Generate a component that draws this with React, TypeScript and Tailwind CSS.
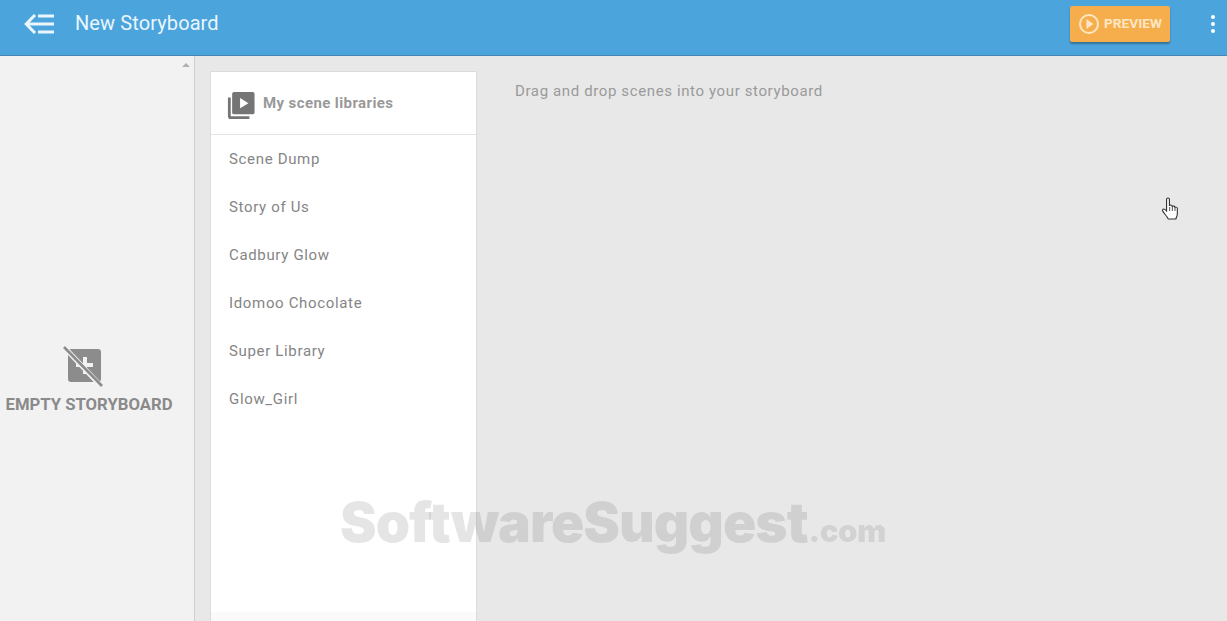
export default function App() {
  const libs = ["Scene Dump", "Story of Us", "Cadbury Glow", "Idomoo Chocolate", "Super Library", "Glow_Girl"];
  return (
    <div className="relative flex h-[621px] w-[1227px] flex-col overflow-hidden bg-[#e8e8e8] font-['Roboto',sans-serif]">
      <header className="flex h-[56px] shrink-0 items-center border-b border-[#4586b5] bg-[#4ca4dc] pb-[8px] pl-[24px] pr-[12px] text-white">
        <svg width="31" height="20" viewBox="0 0 31 20" fill="none" stroke="#eaf6fd" strokeWidth="3">
          <path d="M11 1 2.200 10l8.800 9" />
          <path d="M3 10h27M14 2h16M14 18h16" />
        </svg>
        <h1 className="mb-[1px] ml-[20px] text-[20px] font-normal leading-none tracking-[0.1px] text-[#e9f6fe]">New Storyboard</h1>
        <button className="ml-auto flex h-[36px] w-[100px] items-center rounded-[2px] bg-[#f6ae4c] pl-[8px] shadow-[0_2px_2px_rgba(0,0,0,0.3)]">
          <svg width="22" height="22" viewBox="0 0 22 22" fill="none" stroke="#fde6c4" strokeWidth="2">
            <circle cx="11" cy="11" r="9" />
            <path d="M9 7.200 14.500 11 9 14.800Z" strokeWidth="1.200" fill="#fde6c4" />
          </svg>
          <span className="mb-[1px] ml-[4px] text-[13.7px] font-bold text-[#fde6c4]">PREVIEW</span>
        </button>
        <div className="ml-[41px] flex flex-col gap-[3px]">
          <span className="h-[4px] w-[4px] rounded-full bg-white" />
          <span className="h-[4px] w-[4px] rounded-full bg-white" />
          <span className="h-[4px] w-[4px] rounded-full bg-white" />
        </div>
      </header>
      <div className="flex min-h-0 flex-1">
        <aside className="relative flex w-[195px] shrink-0 flex-col items-center border-r border-[#d0d0d0] bg-[#f2f2f2] pr-[16px] pt-[290px]">
          <span className="absolute right-[4px] top-[7px] h-0 w-0 border-x-[4px] border-b-[4px] border-x-transparent border-b-[#b0b0b0]" />
          <svg width="40" height="41" viewBox="0 0 40 41" className="ml-[-13px]">
            <rect x="5" y="3" width="33" height="33" rx="3" fill="#8c8c8c" />
            <path d="M20 11h4v6h6v4h-6v7h-4v-7h-7v-4h7Z" fill="#f2f2f2" />
            <path d="M0 0 37 39" stroke="#f2f2f2" strokeWidth="5" />
            <path d="M1 1 39 40" stroke="#8c8c8c" strokeWidth="2.600" />
          </svg>
          <span className="mt-[9px] whitespace-nowrap text-[16.7px] font-bold leading-[18px] text-[#8a8a8a]">EMPTY STORYBOARD</span>
        </aside>
        <section className="ml-[15px] mt-[15px] flex w-[267px] shrink-0 flex-col border-x border-t border-[#dcdcdc] bg-white">
          <div className="flex h-[63px] shrink-0 items-center border-b border-[#e4e4e4] pl-[16px]">
            <svg width="28" height="28" viewBox="0 0 30 30" className="mt-[3px]">
              <path d="M1 7h3v20h20v3H4a3 3 0 0 1-3-3Z" fill="#757575" />
              <rect x="5.500" y="1" width="24" height="24" rx="2" fill="#757575" />
              <path d="M14 7.500 23 13l-9 5.500Z" fill="#fff" />
            </svg>
            <span className="ml-[8px] text-[15px] font-bold tracking-[0.4px] text-[#999999]">My scene libraries</span>
          </div>
          <ul className="flex-1">
            {libs.map((l) => (
              <li key={l} className="flex h-[48px] items-center pl-[18px] text-[15px] tracking-[0.66px] text-[#858585]">{l}</li>
            ))}
          </ul>
          <div className="h-[9px] bg-[#fafafa]" />
        </section>
        <main className="flex-1 pl-[38px] pt-[25px]">
          <p className="text-[15px] leading-[20px] tracking-[0.62px] text-[#9a9a9a]">Drag and drop scenes into your storyboard</p>
        </main>
      </div>
      <div className="pointer-events-none absolute left-[340px] top-[489px] flex items-baseline whitespace-nowrap font-['Inter',sans-serif] font-black text-black/10">
        <span className="text-[55px] leading-[66px] tracking-[-1px]">SoftwareSuggest</span>
        <span className="ml-[1px] text-[31px] leading-[66px] tracking-[-0.4px]">.com</span>
      </div>
      <svg width="20" height="24" viewBox="0 0 18 24" preserveAspectRatio="none" className="absolute left-[1161px] top-[197px]">
        <path d="M5 2.500c0-2 2.600-2 2.600 0V9c0-1.400 2.400-1.400 2.400 0v1c0-1.300 2.400-1.300 2.400 0v1c0-1.200 2.300-1.200 2.300.2V17c0 2-1 3-1.300 5H6.500C6 20 2 15.500 1.500 14c-.6-1.700 1-2.500 2-1.500L5 14Z" fill="#fff" stroke="#333" strokeWidth="1" />
        <path d="M7.800 10v4M10.200 10v4M12.600 11v3" stroke="#333" strokeWidth="0.800" />
      </svg>
    </div>
  );
}
